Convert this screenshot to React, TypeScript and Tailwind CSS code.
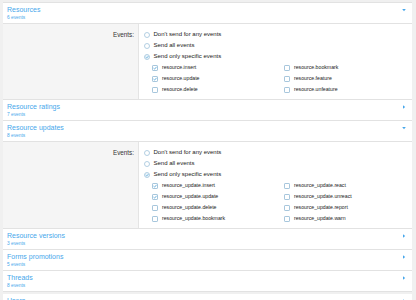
import React from "react";

const BLUE = "#47a7eb";

function Radio({ checked }: { checked?: boolean }) {
  return (
    <svg width="6" height="6" viewBox="0 0 6 6" className="shrink-0">
      <circle cx="3" cy="3" r="2.5" fill={checked ? "#eef6fb" : "#fff"} stroke="#9fc3da" strokeWidth="0.8" />
      {checked && <path d="M1.7 3.1 L2.7 4 L4.4 2.1" fill="none" stroke="#5aa9dc" strokeWidth="0.8" />}
    </svg>
  );
}

function Check({ checked }: { checked?: boolean }) {
  return (
    <svg width="6" height="6" viewBox="0 0 6 6" className="shrink-0">
      <rect x="0.5" y="0.5" width="5" height="5" rx="0.6" fill="#fff" stroke="#8fb8d3" strokeWidth="0.8" />
      {checked && <path d="M1.5 3.1 L2.6 4.1 L4.6 1.8" fill="none" stroke="#4a9fd6" strokeWidth="0.8" />}
    </svg>
  );
}

function Arrow({ open }: { open?: boolean }) {
  return (
    <svg width="4" height="4" viewBox="0 0 4 4" className="shrink-0">
      {open ? <path d="M0.2 1 L3.8 1 L2 3.2 Z" fill={BLUE} /> : <path d="M1 0.2 L3.2 2 L1 3.8 Z" fill={BLUE} />}
    </svg>
  );
}

function Header({ title, sub, open }: { title: string; sub: string; open?: boolean }) {
  return (
    <div className="h-[21px] bg-white border-b border-[#e2e2e2] flex items-start justify-between pl-[4px] pr-[6px]">
      <div className="pt-[3px]">
        <div className="text-[7px] leading-[8px] text-[#47a7eb]">{title}</div>
        <div className="text-[4.8px] leading-[6px] mt-[1px] text-[#47a7eb]">{sub}</div>
      </div>
      <div className="pt-[5px]">
        <Arrow open={open} />
      </div>
    </div>
  );
}

function Body({ left, right }: { left: string[]; right: string[] }) {
  const rows = Math.max(left.length, right.length);
  const items: { label: string; checked: boolean }[] = [];
  for (let i = 0; i < rows; i++) {
    items.push({ label: left[i] ?? "", checked: i < 2 });
    items.push({ label: right[i] ?? "", checked: false });
  }
  return (
    <div className="flex border-b border-[#e2e2e2]">
      <div className="w-[135px] bg-[#f5f5f5] pt-[5px] pr-[4px] text-right">
        <div className="h-[11px] leading-[11px] text-[6.3px] text-[#333]">Events:</div>
      </div>
      <div className="flex-1 bg-white border-l border-[#e4e4e4] pl-[5px] pt-[5px] pb-[4px]">
        <div className="h-[11px] flex items-center gap-[3.5px]">
          <Radio />
          <span className="text-[6px] text-[#222]">Don't send for any events</span>
        </div>
        <div className="h-[11px] flex items-center gap-[3.5px]">
          <Radio />
          <span className="text-[6px] text-[#222]">Send all events</span>
        </div>
        <div className="h-[11px] flex items-center gap-[3.5px]">
          <Radio checked />
          <span className="text-[6px] text-[#222]">Send only specific events</span>
        </div>
        <div className="ml-[8px] grid grid-cols-[132px_1fr]">
          {items.map((it, i) => (
            <div key={i} className="h-[11px] flex items-center gap-[4px]">
              {it.label && <Check checked={it.checked} />}
              <span className="text-[5.2px] text-[#222]">{it.label}</span>
            </div>
          ))}
        </div>
      </div>
    </div>
  );
}

export default function App() {
  return (
    <div className="w-[416px] h-[300px] overflow-hidden bg-[#f0f0f0] pt-[2px] pl-[3px] pr-[4px]" style={{ fontFamily: '"Liberation Sans", Arial, sans-serif' }}>
      <div className="border-t border-[#e2e2e2]">
        <Header title="Resources" sub="6 events" open />
        <Body
          left={["resource.insert", "resource.update", "resource.delete"]}
          right={["resource.bookmark", "resource.feature", "resource.unfeature"]}
        />
        <Header title="Resource ratings" sub="7 events" />
        <Header title="Resource updates" sub="8 events" open />
        <Body
          left={["resource_update.insert", "resource_update.update", "resource_update.delete", "resource_update.bookmark"]}
          right={["resource_update.react", "resource_update.unreact", "resource_update.report", "resource_update.warn"]}
        />
        <Header title="Resource versions" sub="3 events" />
        <Header title="Forms promotions" sub="5 events" />
        <Header title="Threads" sub="8 events" />
        <div className="h-[2px]" />
        <Header title="Users" sub="9 events" />
      </div>
    </div>
  );
}
